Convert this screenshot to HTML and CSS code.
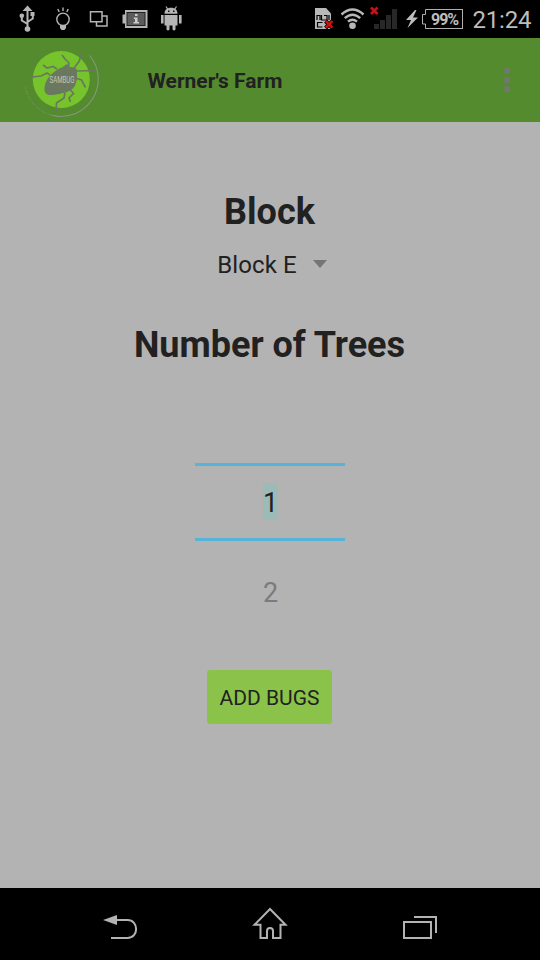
FILE: index.html
```html
<!DOCTYPE html>
<html lang="en">
<head>
<meta charset="utf-8">
<title>Werner's Farm</title>
<link rel="stylesheet" href="styles.css">
</head>
<body>
<div class="screen">
  <div class="status">
    <svg class="status-left" width="200" height="38" viewBox="0 0 200 38">
      <g fill="none" stroke="#b5b5b5" stroke-width="2">
        <path d="M27.500 9V28M27.500 24L21.800 20.500V16M27.500 22L32.800 18.500V15"/>
        <circle cx="63" cy="19.300" r="6.200" stroke-width="1.400"/>
        <path d="M63 7.500V11M57.800 9L59.200 12M68.200 9L66.800 12" stroke-width="1.400"/>
        <path d="M90.500 11.800h11.500v10H90.500zM102 16h5v10H96.500v-4" stroke-width="1.500"/>
        <path d="M166 6.500L168 9.500M176.500 6.500L174.500 9.500" stroke-width="1.200"/>
      </g>
      <g fill="#b5b5b5">
        <path d="M27.500 5.500l5 5.500h-10z"/><circle cx="27.500" cy="29" r="2.800"/><circle cx="21.800" cy="15.800" r="2.300"/><rect x="30.500" y="12" width="4" height="4"/>
        <path d="M60 25h6v3l-1.500 2h-3L60 28z"/>
        <path d="M125 10H147.500v18H125v-4.500H122.500v-9h2.500z"/>
        <path d="M164.500 13.800c0-4 2.500-6 6.500-6s6.500 2 6.500 6zM164.500 15h13v10.500h-2V29.500q-1.500 2-3 0V25.500h-3V29.500q-1.500 2-3 0V25.500h-2zM161 15h2.600v8.500h-2.600zM179 15h2.600v8.500h-2.600z"/>
      </g>
      <rect x="127" y="12.500" width="18" height="13" fill="#5c5c5c" stroke="#222"/>
      <path d="M135 14h2.500v2H135zM133.800 17.500h3.700V22h1.500v1.500h-5.500V22h1.500v-3h-1.200z" fill="#ccc"/>
      <path d="M168 10.500h1.500v1.500H168zM173 10.500h1.500v1.500H173z" fill="#111"/>
    </svg>
    <svg class="status-right" width="122" height="38" viewBox="310 0 122 38">
      <path d="M315 8h11l5 5.500V29h-16z" fill="#b8b8b8"/>
      <path d="M317 20V15.500h3V20M317 22.500h5.500M317.500 22.500V27h5M321.500 15v5h5.500v-4.500h-3M329 15v5" fill="none" stroke="#000" stroke-width="1.200"/>
      <path d="M325.500 21l7 7M332.500 21l-7 7" stroke="#000" stroke-width="4"/>
      <path d="M325.800 21.200l6.500 6.500M332.300 21.200l-6.500 6.500M371 7.500l6.500 6.500M377.500 7.500l-6.500 6.500" stroke="#cf1010" stroke-width="2.600"/>
      <g fill="none" stroke="#b8b8b8" stroke-width="2.400"><path d="M341.500 14.500q11-10 22 0M344.800 18.200q7.700-7 15.400 0M348 21.700q4.500-3.800 9 0"/></g>
      <circle cx="352.500" cy="25.700" r="3.300" fill="#b8b8b8"/>
      <path d="M374 24h5v5h-5zM380 20h5v9h-5zM386 15h5v14h-5zM392 9h5v20h-5z" fill="#282828"/>
      <path d="M415 10L406 20h5L407.500 28L418 17.500h-5L416.500 10z" fill="#bdbdbd"/>
      <path d="M432 28.500H425.500V24H422.500V14.500H425.500V9.500H432" fill="none" stroke="#b0b0b0"/>
    </svg>
    <div class="battery">99%</div>
    <div class="clock">21:24</div>
  </div>
  <header class="bar">
    <svg class="logo" width="84" height="84" viewBox="20 38 84 84">
      <circle cx="61.300" cy="79.500" r="28.500" fill="#77c32c"/>
      <path d="M89.700 55.500A37.200 37.200 0 0 1 52 115.300" fill="none" stroke="#86957c" stroke-width="1.100"/>
      <path d="M52 115.300A37.200 37.200 0 0 1 25.200 87" fill="none" stroke="#6f9555" stroke-width=".9" stroke-dasharray="5 1.500"/>
      <path d="M74.500 67.500L79.300 61L82 52M77 71L95.500 70.500M68.700 66V62.500L65 59L62 55M57 69L53 66.500L47 68L43 65M50 75L47 73L41 76L32 77M77 78.500L81.500 80L85.500 87.500M65 92.500L64 98L56.500 103L56 111M70.500 90L73.500 93.500L69 98L70.500 102" fill="none" stroke="#69785f" stroke-width="1.700"/>
      <path d="M44.500 89C44.500 83 48 76.500 53.500 72.500C57 69.500 60 68 62 67.500L67 64L70 67L75 67.500L77 70V79L75 86C72 90 68 92 65 92.500C59 94.500 53 95 48.500 95Q44 93.500 44.500 89z" fill="#69785f"/>
      <text class="logo-text" x="49.500" y="82.500" textLength="25" lengthAdjust="spacingAndGlyphs">SAMBUG</text>
    </svg>
    <h1 class="title">Werner's Farm</h1>
    <div class="more"><i></i><i></i><i></i></div>
  </header>
  <main class="content">
    <h2 class="heading">Block</h2>
    <div class="spinner"><span>Block E</span><i class="caret"></i></div>
    <h2 class="heading trees">Number of Trees</h2>
    <div class="picker">
      <div class="selected"><span class="mark">1</span></div>
      <div class="next">2</div>
    </div>
    <button class="add">ADD BUGS</button>
  </main>
  <nav class="nav">
    <svg width="540" height="72" viewBox="0 888 540 72" fill="none" stroke="#b3b3b3" stroke-width="2">
      <path d="M117 920H127.500C139 920 139 938 127.500 938H111"/>
      <path d="M103 920L117 915V925z" fill="#b3b3b3" stroke="none"/>
      <path d="M270 909L254.500 924.800H260.500V938H267V931c0-4 6-4 6 0V938H280.500V924.800H285.500z"/>
      <path d="M404 922H431V938H404zM414 917H436V933"/>
    </svg>
  </nav>
</div>
</body>
</html>
```
FILE: styles.css
```css
body { margin: 0; background: #b3b3b3; font-family: Roboto, sans-serif; color: #212121; }
.screen { width: 540px; height: 960px; display: flex; flex-direction: column; overflow: hidden; }
.status { height: 38px; background: #000; display: flex; align-items: center; color: #bdbdbd; }
.status svg { display: block; }
.status-right { margin-left: 110px; }
.battery { box-sizing: border-box; width: 31px; height: 20px; border: 1px solid #b0b0b0; border-left: 0; font-size: 16px; line-height: 20px; font-weight: 700; letter-spacing: -1px; text-indent: -1px; white-space: nowrap; }
.clock { margin: 2px 0 0 9.5px; font-size: 24px; line-height: 38px; letter-spacing: -.2px; }
.bar { height: 84px; background: #558b2f; display: flex; align-items: center; }
.logo { margin-left: 20px; }
.logo-text { font-family: Roboto, sans-serif; font-size: 8.5px; fill: #c3c9bd; }
.title { margin: 2px 0 0 43.5px; font-size: 21px; line-height: 26px; font-weight: 700; flex: 1; }
.more { display: flex; flex-direction: column; gap: 3px; margin-right: 30px; }
.more i { width: 6px; height: 6px; border-radius: 50%; background: #757575; }
.content { flex: 1; box-sizing: border-box; padding-top: 69px; display: flex; flex-direction: column; align-items: center; }
.heading { margin: 0 1px 0 0; font-size: 36px; line-height: 42px; font-weight: 700; }
.spinner { display: flex; align-items: center; gap: 16px; margin: 18px 0 0 4px; font-size: 24px; line-height: 28px; letter-spacing: .1px; }
.caret { border: 7px solid transparent; border-top: 8px solid #757575; border-bottom: 0; margin-top: -2px; }
.trees { margin-top: 45px; }
.picker { width: 150px; margin-top: 97px; text-align: center; font-size: 27px; }
.selected { height: 72px; border: solid #56b4d8; border-width: 3px 0; display: flex; justify-content: center; align-items: center; }
.mark { width: 15px; height: 37px; line-height: 40px; background: #9cbbb7; margin: -1px 0 0 1px; }
.next { margin-top: 36px; line-height: 32px; color: #7b7b7b; text-indent: 1px; }
.add { width: 125px; height: 54px; margin: 61px 1px 0 0; padding: 2px 0 0; border: 0; border-radius: 3px; background: #8bc34a; color: #212121; font: 21px Roboto, sans-serif; }
.nav { height: 72px; background: #000; }
.nav svg { display: block; }
```
